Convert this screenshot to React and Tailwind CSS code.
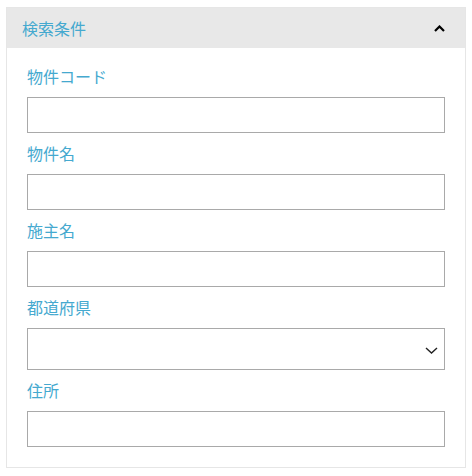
const font = { fontFamily: '"Noto Sans CJK JP", "Noto Sans", sans-serif' };

function Field({ label, select = false }) {
  return (
    <div className="flex flex-col">
      <label className="text-[16px] leading-6 text-[#45a9cf] mb-[9px]">{label}</label>
      {select ? (
        <div className="relative h-[42px] border border-[#a9a9a9] bg-white">
          <svg
            className="absolute right-[6px] top-[18px]"
            width="13"
            height="7"
            viewBox="0 0 13 7"
            fill="none"
          >
            <path d="M1 1l5.5 5L12 1" stroke="#222" strokeWidth="1.4" />
          </svg>
        </div>
      ) : (
        <input className="h-9 border border-[#a9a9a9] bg-white outline-none px-2" />
      )}
    </div>
  );
}

export default function App() {
  return (
    <div className="w-[472px] h-[476px] bg-white pt-[7px] pl-[6px]" style={font}>
      <div className="w-[460px] border border-[#e6e6e6] bg-white">
        <div className="h-[40px] bg-[#e8e8e8] flex items-center justify-between pl-[15px] pr-[20px]">
          <span className="text-[16px] text-[#45a9cf]">検索条件</span>
          <svg width="11" height="7" viewBox="0 0 11 7" fill="none">
            <path d="M1 6l4.5-4.5L10 6" stroke="#000" strokeWidth="2.2" />
          </svg>
        </div>
        <div className="px-5 pt-4 pb-5 flex flex-col gap-2">
          <Field label="物件コード" />
          <Field label="物件名" />
          <Field label="施主名" />
          <Field label="都道府県" select />
          <Field label="住所" />
        </div>
      </div>
    </div>
  );
}
